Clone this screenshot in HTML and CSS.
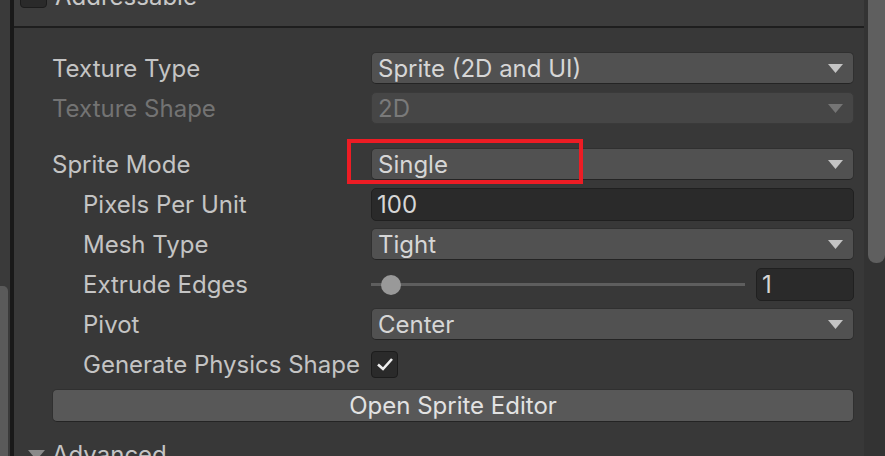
FILE: index.html
```html
<!DOCTYPE html>
<html>
<head>
    <meta charset="UTF-8">
    <title>Sprite Import Settings</title>
    <link rel="stylesheet" href="styles.css">
</head>
<body>
    <div class="window">
        <div class="side-bar">
            <div class="side-thumb"></div>
        </div>
        <div class="side-line"></div>
        <div class="inspector">
            <div class="header-row">
                <span class="check-box empty"></span>
                <span class="header-label">Addressable</span>
            </div>
            <div class="settings">
                <div class="field-row">
                    <label class="field-label">Texture Type</label>
                    <div class="dropdown">
                        <span>Sprite (2D and UI)</span>
                        <svg class="arrow" width="15" height="9" viewBox="0 0 15 9"><polygon points="0,0 15,0 7.5,9"/></svg>
                    </div>
                </div>
                <div class="field-row">
                    <label class="field-label disabled">Texture Shape</label>
                    <div class="dropdown disabled">
                        <span>2D</span>
                        <svg class="arrow" width="15" height="9" viewBox="0 0 15 9"><polygon points="0,0 15,0 7.5,9"/></svg>
                    </div>
                </div>
                <div class="field-row spaced">
                    <label class="field-label">Sprite Mode</label>
                    <div class="dropdown">
                        <span>Single</span>
                        <svg class="arrow" width="15" height="9" viewBox="0 0 15 9"><polygon points="0,0 15,0 7.5,9"/></svg>
                        <div class="highlight"></div>
                    </div>
                </div>
                <div class="field-row">
                    <label class="field-label sub">Pixels Per Unit</label>
                    <div class="text-field">100</div>
                </div>
                <div class="field-row">
                    <label class="field-label sub">Mesh Type</label>
                    <div class="dropdown">
                        <span>Tight</span>
                        <svg class="arrow" width="15" height="9" viewBox="0 0 15 9"><polygon points="0,0 15,0 7.5,9"/></svg>
                    </div>
                </div>
                <div class="field-row">
                    <label class="field-label sub">Extrude Edges</label>
                    <div class="slider-group">
                        <div class="slider">
                            <div class="slider-track"></div>
                            <div class="slider-knob"></div>
                        </div>
                        <div class="text-field small">1</div>
                    </div>
                </div>
                <div class="field-row">
                    <label class="field-label sub">Pivot</label>
                    <div class="dropdown">
                        <span>Center</span>
                        <svg class="arrow" width="15" height="9" viewBox="0 0 15 9"><polygon points="0,0 15,0 7.5,9"/></svg>
                    </div>
                </div>
                <div class="field-row">
                    <label class="field-label sub">Generate Physics Shape</label>
                    <div class="toggle-cell">
                        <span class="check-box">
                            <svg width="18" height="14" viewBox="0 0 18 14"><polyline points="2,7.5 7,12 16,2" fill="none" stroke="#eeeeee" stroke-width="2.6"/></svg>
                        </span>
                    </div>
                </div>
                <button class="wide-button">Open Sprite Editor</button>
                <div class="foldout">
                    <svg class="fold-arrow" width="17" height="10" viewBox="0 0 17 10"><polygon points="0,0 17,0 8.5,10"/></svg>
                    <span>Advanced</span>
                </div>
            </div>
        </div>
        <div class="scroll-bar">
            <div class="scroll-thumb"></div>
        </div>
    </div>
</body>
</html>
```

FILE: styles.css
```css
body {
    margin: 0;
    padding: 0;
    background-color: #383838;
    font-family: Inter, "Noto Sans", sans-serif;
    font-size: 24px;
    color: #c4c4c4;
    overflow: hidden;
}
.window {
    display: flex;
    width: 885px;
    height: 456px;
    overflow: hidden;
}
.side-bar {
    width: 10px;
    background-color: #3a3a3a;
}
.side-thumb {
    margin-top: 286px;
    width: 8px;
    height: 200px;
    background-color: #5a5a5a;
    border-radius: 0 5px 0 0;
}
.side-line {
    width: 4px;
    background-color: #191919;
}
.inspector {
    width: 850px;
    display: flex;
    flex-direction: column;
}
.header-row {
    position: relative;
    flex: none;
    height: 26px;
    background-color: #3c3c3c;
    border-bottom: 2px solid #1e1e1e;
    overflow: hidden;
}
.header-row .check-box {
    position: absolute;
    left: 6px;
    top: -19px;
}
.header-label {
    position: absolute;
    left: 41px;
    top: -18px;
    line-height: 30px;
    color: #c8c8c8;
}
.settings {
    padding: 24px 10px 0 38px;
    display: flex;
    flex-direction: column;
    gap: 8px;
}
.field-row {
    display: grid;
    grid-template-columns: 319px 1fr;
    height: 32px;
    align-items: center;
}
.field-row.spaced {
    margin-top: 16px;
}
.field-label {
    white-space: nowrap;
    color: #c4c4c4;
}
.field-label.sub {
    padding-left: 31px;
}
.field-label.disabled {
    color: #737373;
}
.dropdown {
    position: relative;
    height: 32px;
    box-sizing: border-box;
    display: flex;
    align-items: center;
    justify-content: space-between;
    padding: 0 10px 0 6px;
    background-color: #515151;
    border: 1px solid #303030;
    border-bottom-color: #242424;
    border-radius: 5px;
    color: #d6d6d6;
}
.dropdown.disabled {
    background-color: #464646;
    border-color: #3a3a3a;
    color: #7a7a7a;
}
.arrow {
    fill: #c4c4c4;
}
.dropdown.disabled .arrow {
    fill: #757575;
}
.highlight {
    position: absolute;
    left: -25px;
    top: -10px;
    width: 228px;
    height: 37px;
    border: 4px solid #ed1c24;
}
.text-field {
    height: 33px;
    box-sizing: border-box;
    display: flex;
    align-items: center;
    padding: 0 5px;
    background-color: #2a2a2a;
    border: 1px solid #202020;
    border-radius: 5px;
    color: #d6d6d6;
}
.text-field.small {
    width: 98px;
}
.slider-group {
    display: flex;
    align-items: center;
    gap: 11px;
}
.slider {
    position: relative;
    flex: 1;
    height: 33px;
    display: flex;
    align-items: center;
}
.slider-track {
    width: 100%;
    height: 3px;
    background-color: #5e5e5e;
}
.slider-knob {
    position: absolute;
    left: 10px;
    top: 7px;
    width: 20px;
    height: 20px;
    border-radius: 50%;
    background-color: #999999;
}
.toggle-cell {
    display: flex;
    align-items: center;
}
.check-box {
    width: 27px;
    height: 27px;
    box-sizing: border-box;
    display: flex;
    align-items: center;
    justify-content: center;
    background-color: #2a2a2a;
    border: 1px solid #1c1c1c;
    border-radius: 4px;
}
.wide-button {
    margin-top: 1px;
    height: 33px;
    font-family: Inter, "Noto Sans", sans-serif;
    font-size: 24px;
    color: #e2e2e2;
    background-color: #585858;
    border: 1px solid #303030;
    border-bottom-color: #242424;
    border-radius: 5px;
}
.foldout {
    margin-top: 10px;
    margin-left: -24px;
    display: flex;
    align-items: center;
    gap: 7px;
}
.fold-arrow {
    fill: #8a8a8a;
}
.scroll-bar {
    width: 21px;
    background-color: #333333;
    display: flex;
    justify-content: flex-end;
}
.scroll-thumb {
    width: 17px;
    height: 263px;
    background-color: #5f5f5f;
    border-radius: 0 0 8px 8px;
}
```
